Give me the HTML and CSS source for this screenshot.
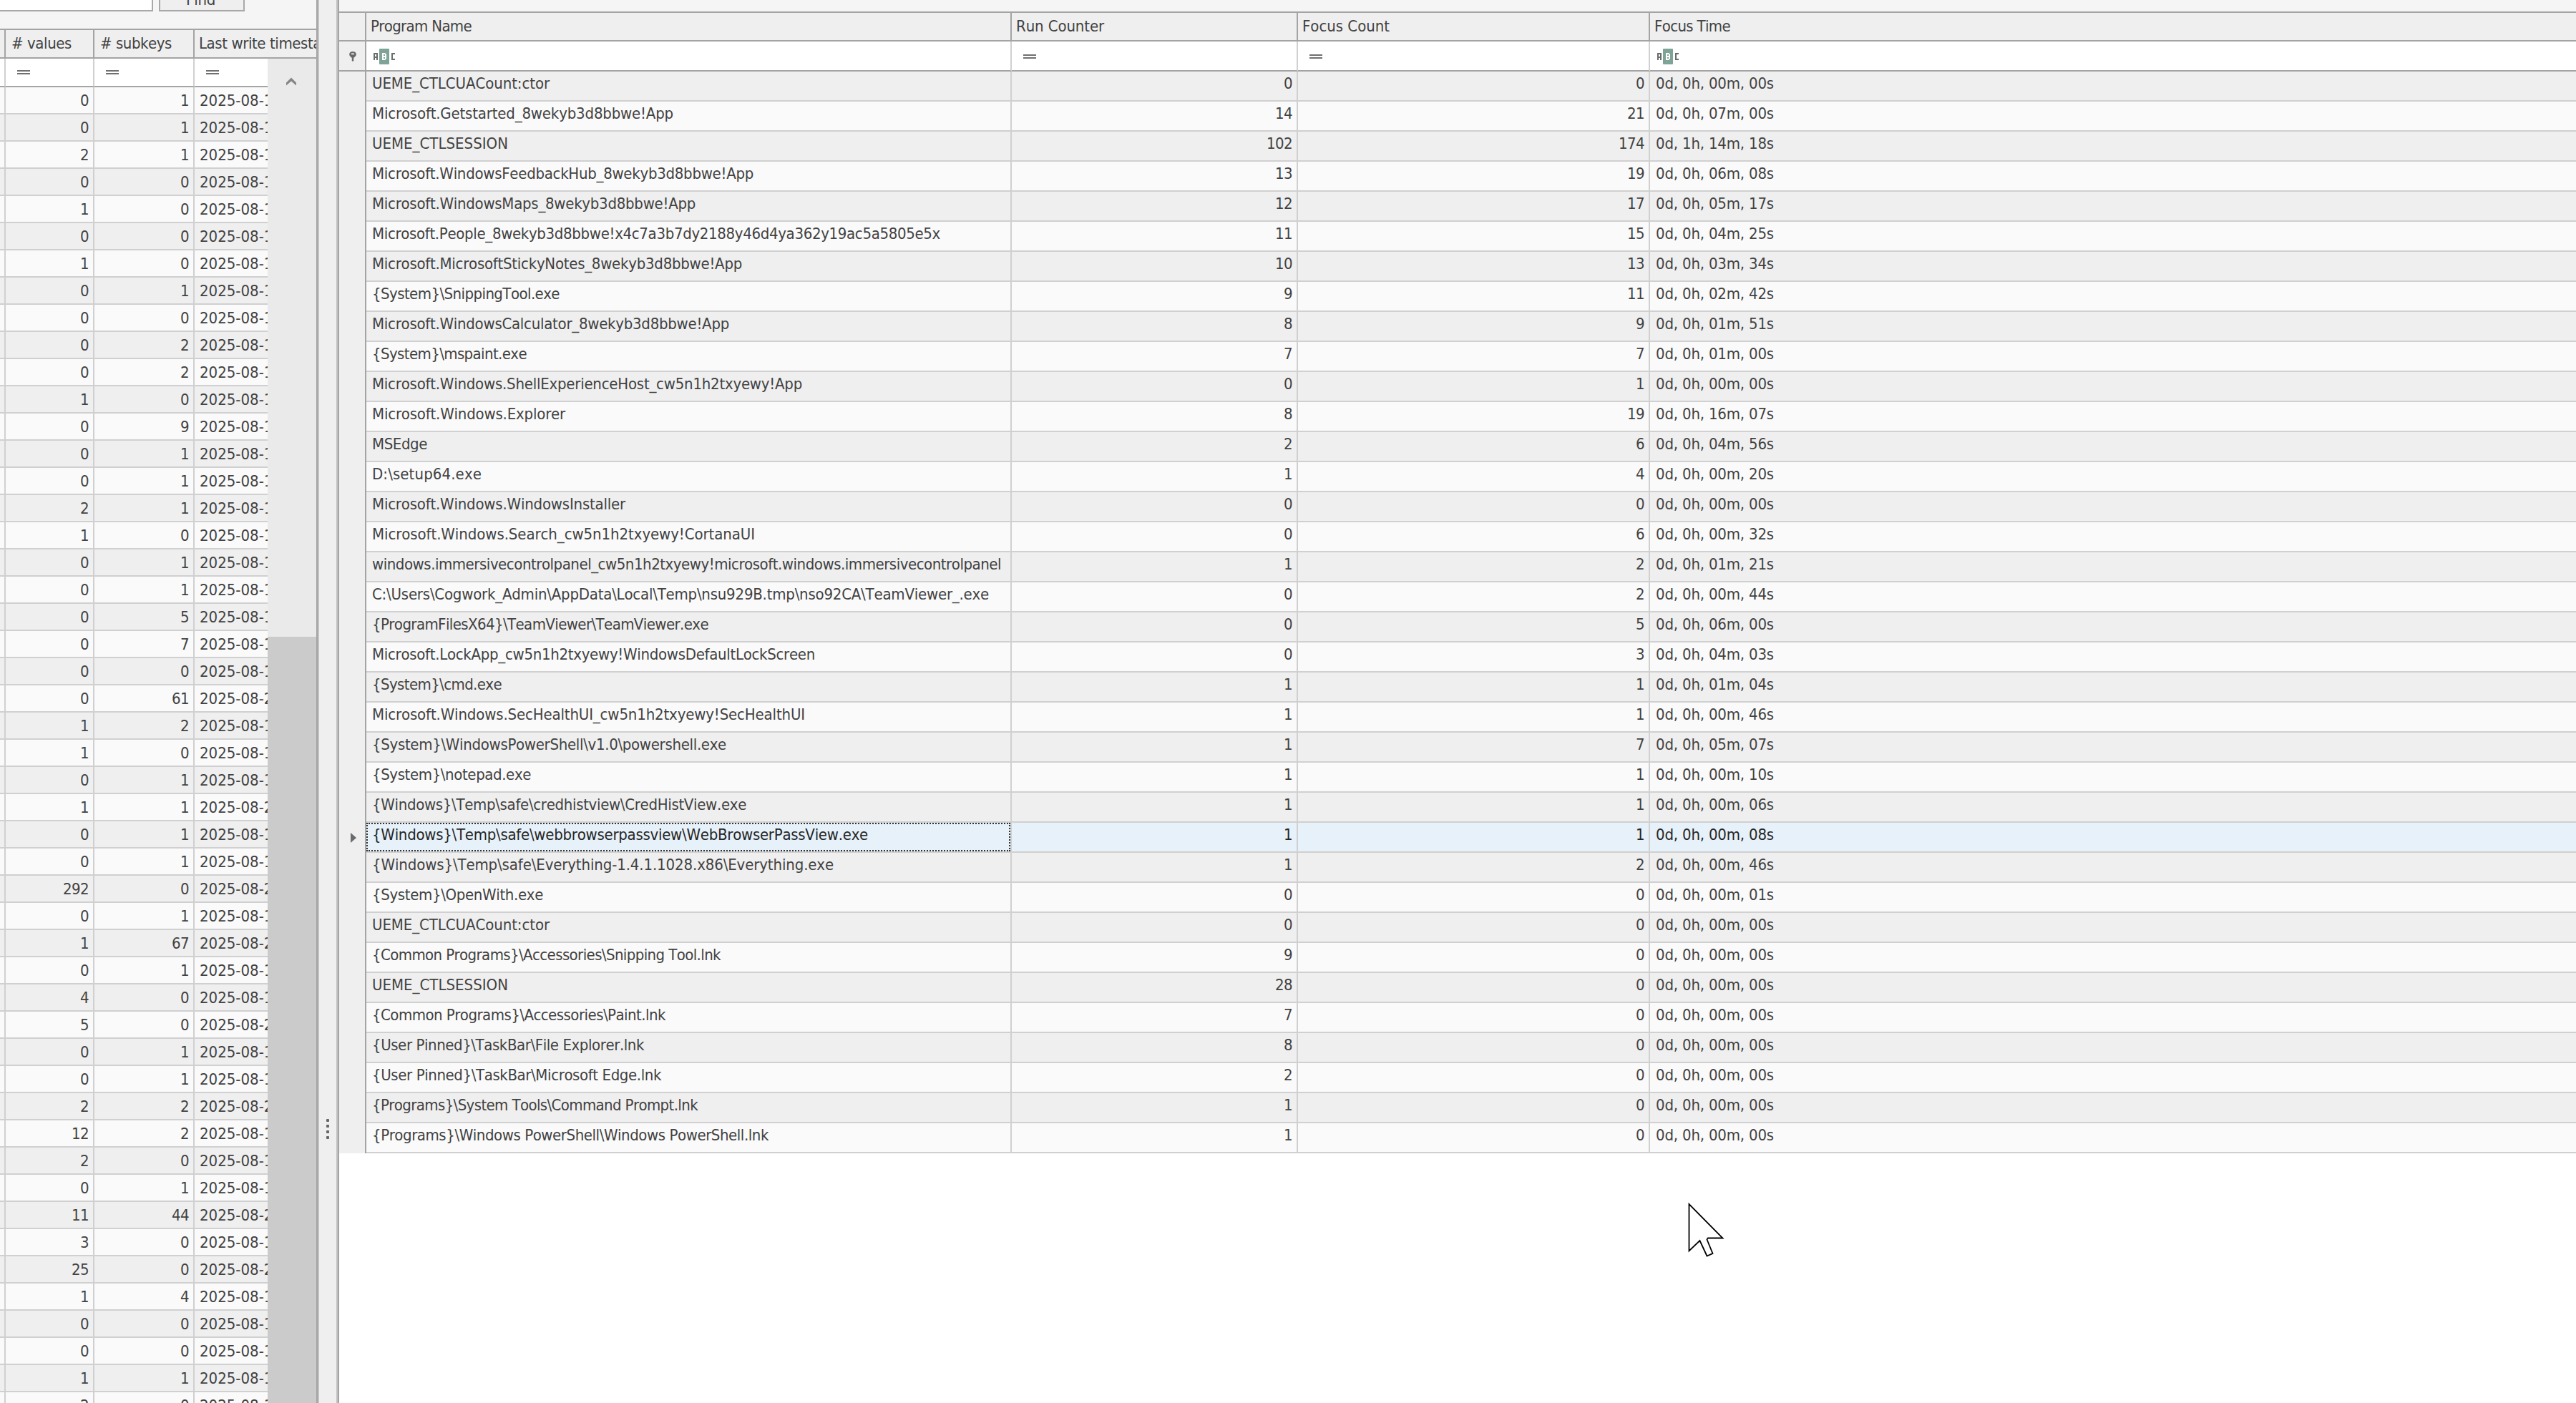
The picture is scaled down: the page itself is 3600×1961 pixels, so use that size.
FILE: index.html
```html
<!DOCTYPE html>
<html lang="en">
<head>
<meta charset="utf-8">
<title>Registry viewer</title>
<link rel="stylesheet" href="styles.css">
</head>
<body>
<div class="app">
  <section class="keys">
    <div class="search">
      <div class="search-box"></div>
      <div class="find"><span data-w="41">Find</span></div>
    </div>
    <div class="krow khead">
      <div></div>
      <div><span data-w="84">#&nbsp;values</span></div>
      <div><span data-w="100">#&nbsp;subkeys</span></div>
      <div><span data-w="202">Last write timestamp</span></div>
    </div>
    <div class="kbody">
      <div class="kgrid" id="keys">
        <div class="krow kfilter">
          <div></div><div><i class="eq"></i></div><div><i class="eq"></i></div><div><i class="eq"></i></div>
        </div>
      </div>
      <div class="scroll">
        <svg class="up" width="16" height="14" viewBox="0 0 16 14"><path d="M1 8.500 8 1.500 15 8.500V12.500L8 6.500 1 12.500Z" fill="#868686"/></svg>
        <div class="thumb"></div>
      </div>
    </div>
  </section>
  <div class="splitter"><i></i><i></i><i></i><i></i></div>
  <section class="programs">
    <div class="strip"></div>
    <div class="prow phead">
      <div></div>
      <div><span data-w="141">Program Name</span></div>
      <div><span data-w="123">Run Counter</span></div>
      <div><span data-w="122">Focus Count</span></div>
      <div><span data-w="106">Focus Time</span></div>
    </div>
    <div class="prow pfilter">
      <div class="pin"><svg width="12" height="16" viewBox="0 0 12 16"><path d="M6 1C8.800 1 10.800 2.600 10.800 5 10.800 7 9 8.500 7.200 10V14.500H4.800V10C3 8.500 1.200 7 1.200 5 1.200 2.600 3.200 1 6 1Z" fill="#686868"/><rect x="4" y="3" width="4" height="2.500" fill="#c4c4c4"/></svg></div>
      <div><svg class="abc" width="32" height="24" viewBox="0 0 32 24"><path d="M2 17V8H6V17M2 13H6M31 8H27V16H31" fill="none" stroke="#6c6c6c" stroke-width="2"/><rect x="9" y="1" width="14" height="22" rx="1" fill="#7fa396"/><path d="M13 7H17L19 9V15L17 17H13Z" fill="#fff"/><path d="M15 9H17V11H15ZM15 13H17V15H15Z" fill="#7fa396"/></svg></div>
      <div><i class="eq"></i></div>
      <div><i class="eq"></i></div>
      <div><svg class="abc" width="32" height="24" viewBox="0 0 32 24"><path d="M2 17V8H6V17M2 13H6M31 8H27V16H31" fill="none" stroke="#6c6c6c" stroke-width="2"/><rect x="9" y="1" width="14" height="22" rx="1" fill="#7fa396"/><path d="M13 7H17L19 9V15L17 17H13Z" fill="#fff"/><path d="M15 9H17V11H15ZM15 13H17V15H15Z" fill="#7fa396"/></svg></div>
    </div>
    <div id="programs"></div>
  </section>
</div>
<svg class="cursor" width="56" height="80" viewBox="0 0 56 80"><path d="M1.500 2V67.500L16.500 53 26.500 74.500 34.500 71 26.500 51.500 28 49.500H48.500Z" fill="#fff" stroke="#000" stroke-width="1.800"/></svg>
<script src="app.js"></script>
</body>
</html>
```
FILE: styles.css
```css
* { box-sizing: border-box; }
body {
  margin: 0;
  width: 3600px;
  height: 1961px;
  overflow: hidden;
  background: #fff;
  color: #424242;
  font: 22px/36px "DejaVu Sans Condensed", "DejaVu Sans", sans-serif;
  font-stretch: condensed;
  font-kerning: none;
  font-variant-ligatures: none;
  white-space: nowrap;
}
.app { display: flex; height: 1961px; }
span { display: inline-block; }

.keys {
  width: 446px;
  height: 1961px;
  display: flex;
  flex-direction: column;
  background: #f5f5f5;
  border-right: 2px solid #c2c2c2;
  box-shadow: inset -2px 0 #a4a4a4;
  padding-right: 2px;
  overflow: hidden;
}
.search { height: 40px; flex: none; display: flex; gap: 8px; align-items: flex-start; }
.search-box { width: 214px; height: 16px; background: #fff; border: solid #a8a8a8; border-width: 0 2px 2px 0; }
.find {
  width: 120px;
  height: 16px;
  background: #efefef;
  border: solid #a8a8a8;
  border-width: 0 2px 2px;
  padding-left: 36px;
  line-height: 0;
  overflow: hidden;
}
.find span { margin-top: -4px; }
.krow { display: grid; grid-template-columns: 8px 124px 140px 1fr; flex: none; }
.krow > div { border: solid #d0d0d0; border-width: 0 2px 2px 0; height: 38px; overflow: hidden; line-height: 37px; }
.krow > div:last-child { border-right: 0; }
.khead { border-top: 2px solid #a4a4a4; }
.krow.khead > div { height: 40px; border-color: #a4a4a4; background: #efefef; padding-left: 8px; }
.krow.khead > div:last-child { padding-left: 6px; }
.krow.khead > div:first-child { padding: 0; }
.kbody { flex: 1; display: flex; min-height: 0; }
.kgrid { width: 374px; overflow: hidden; }
.krow.kfilter > div { height: 40px; background: #fff; border-bottom-color: #a4a4a4; }
.krow .n { text-align: right; padding-right: 6px; letter-spacing: -0.6px; }
.krow .d { padding-left: 7px; }
.light > div { background: #fafafa; }
.dark > div { background: #efefef; }
.eq { display: block; width: 18px; height: 6px; margin: 16px 0 0 16px; border: solid #707070; border-width: 2px 0; }
.pfilter .eq { margin-top: 18px; }
.scroll { width: 68px; background: #eaeaea; display: flex; flex-direction: column; align-items: center; justify-content: space-between; padding-top: 25px; }
.up { margin-right: 2px; }
.thumb { width: 68px; height: 1071px; background: #cbcbcb; }

.splitter {
  width: 28px;
  background: #efefef;
  border-right: 2px solid #a4a4a4;
  box-shadow: inset -2px 0 #c2c2c2;
  padding: 1564px 0 0 10px;
  display: flex;
  flex-direction: column;
  gap: 4px;
}
.splitter i { width: 4px; height: 4px; background: #666; border-radius: 1px; }

.programs { flex: 1; }
.strip { height: 18px; background: #f5f5f5; border-bottom: 2px solid #a4a4a4; }
.prow { display: grid; grid-template-columns: 38px 902px 400px 492px 1fr; }
.prow > div { height: 42px; border: solid #d0d0d0; border-width: 0 2px 2px 0; line-height: 33px; overflow: hidden; }
.prow > div:last-child { border-right: 0; }
.prow.phead > div { height: 40px; line-height: 37px; background: #efefef; border-color: #a4a4a4; padding-left: 6px; }
.prow.pfilter > div { border-bottom-color: #a4a4a4; background: #fff; }
.prow > div:first-child, .prow.pfilter > div:first-child { background: #efefef; border-right-color: #a4a4a4; }
.prow:not(.phead):not(.pfilter) > div:first-child { border-bottom-width: 0; }
.pin svg { display: block; margin: 13px 0 0 13px; }
.abc { display: block; margin: 9px 0 0 9px; }
.prow .name { padding-left: 8px; }
.prow .n { text-align: right; padding-right: 6px; letter-spacing: -0.6px; }
.prow .time { padding-left: 8px; }
.prow.selected > div:not(:first-child) { background: #e6f1f9; color: #262626; }
.prow .focus { position: relative; }
.focus::after { content: ""; position: absolute; inset: 0; border: 2px dotted #333; }
.arrow { display: block; margin: 14px 0 0 16px; }
.cursor { position: absolute; left: 2359px; top: 1681px; }
```
FILE: app.js
```js
// values, subkeys, last write date
const keys = `0 1 19;0 1 19;2 1 19;0 0 19;1 0 19;0 0 19;1 0 19;0 1 19;0 0 19;0 2 19;0 2 19;1 0 19;0 9 19;0 1 19;0 1 19;2 1 19;1 0 19;0 1 19;0 1 19;0 5 19;0 7 19;0 0 19;0 61 20;1 2 19;1 0 19;0 1 19;1 1 20;0 1 19;0 1 19;292 0 20;0 1 19;1 67 20;0 1 19;4 0 19;5 0 20;0 1 19;0 1 19;2 2 20;12 2 19;2 0 19;0 1 19;11 44 20;3 0 19;25 0 20;1 4 19;0 0 19;0 0 19;1 1 19;2 0 19`;

// name | run counter | focus count | focus time | text width
const programs = String.raw`UEME_CTLCUACount:ctor|0|0|0d, 0h, 00m, 00s|248
Microsoft.Getstarted_8wekyb3d8bbwe!App|14|21|0d, 0h, 07m, 00s|421
UEME_CTLSESSION|102|174|0d, 1h, 14m, 18s|190
Microsoft.WindowsFeedbackHub_8wekyb3d8bbwe!App|13|19|0d, 0h, 06m, 08s|533
Microsoft.WindowsMaps_8wekyb3d8bbwe!App|12|17|0d, 0h, 05m, 17s|452
Microsoft.People_8wekyb3d8bbwe!x4c7a3b7dy2188y46d4ya362y19ac5a5805e5x|11|15|0d, 0h, 04m, 25s|794
Microsoft.MicrosoftStickyNotes_8wekyb3d8bbwe!App|10|13|0d, 0h, 03m, 34s|517
{System}\SnippingTool.exe|9|11|0d, 0h, 02m, 42s|262
Microsoft.WindowsCalculator_8wekyb3d8bbwe!App|8|9|0d, 0h, 01m, 51s|499
{System}\mspaint.exe|7|7|0d, 0h, 01m, 00s|216
Microsoft.Windows.ShellExperienceHost_cw5n1h2txyewy!App|0|1|0d, 0h, 00m, 00s|601
Microsoft.Windows.Explorer|8|19|0d, 0h, 16m, 07s|270
MSEdge|2|6|0d, 0h, 04m, 56s|77
D:\setup64.exe|1|4|0d, 0h, 00m, 20s|153
Microsoft.Windows.WindowsInstaller|0|0|0d, 0h, 00m, 00s|354
Microsoft.Windows.Search_cw5n1h2txyewy!CortanaUI|0|6|0d, 0h, 00m, 32s|535
windows.immersivecontrolpanel_cw5n1h2txyewy!microsoft.windows.immersivecontrolpanel|1|2|0d, 0h, 01m, 21s|879
C:\Users\Cogwork_Admin\AppData\Local\Temp\nsu929B.tmp\nso92CA\TeamViewer_.exe|0|2|0d, 0h, 00m, 44s|862
{ProgramFilesX64}\TeamViewer\TeamViewer.exe|0|5|0d, 0h, 06m, 00s|470
Microsoft.LockApp_cw5n1h2txyewy!WindowsDefaultLockScreen|0|3|0d, 0h, 04m, 03s|619
{System}\cmd.exe|1|1|0d, 0h, 01m, 04s|181
Microsoft.Windows.SecHealthUI_cw5n1h2txyewy!SecHealthUI|1|1|0d, 0h, 00m, 46s|605
{System}\WindowsPowerShell\v1.0\powershell.exe|1|7|0d, 0h, 05m, 07s|495
{System}\notepad.exe|1|1|0d, 0h, 00m, 10s|222
{Windows}\Temp\safe\credhistview\CredHistView.exe|1|1|0d, 0h, 00m, 06s|523
{Windows}\Temp\safe\webbrowserpassview\WebBrowserPassView.exe|1|1|0d, 0h, 00m, 08s|693
{Windows}\Temp\safe\Everything-1.4.1.1028.x86\Everything.exe|1|2|0d, 0h, 00m, 46s|645
{System}\OpenWith.exe|0|0|0d, 0h, 00m, 01s|239
UEME_CTLCUACount:ctor|0|0|0d, 0h, 00m, 00s|248
{Common Programs}\Accessories\Snipping Tool.lnk|9|0|0d, 0h, 00m, 00s|487
UEME_CTLSESSION|28|0|0d, 0h, 00m, 00s|190
{Common Programs}\Accessories\Paint.lnk|7|0|0d, 0h, 00m, 00s|410
{User Pinned}\TaskBar\File Explorer.lnk|8|0|0d, 0h, 00m, 00s|380
{User Pinned}\TaskBar\Microsoft Edge.lnk|2|0|0d, 0h, 00m, 00s|404
{Programs}\System Tools\Command Prompt.lnk|1|0|0d, 0h, 00m, 00s|455
{Programs}\Windows PowerShell\Windows PowerShell.lnk|1|0|0d, 0h, 00m, 00s|554`;

document.getElementById('keys').insertAdjacentHTML('beforeend',
  keys.split(';').map((line, i) => {
    const [v, s, d] = line.split(' ');
    return `<div class="krow ${i % 2 ? 'dark' : 'light'}"><div></div><div class="n">${v}</div><div class="n">${s}</div><div class="d"><span data-w="115">2025-08-${d}</span></div></div>`;
  }).join(''));

const SELECTED = 25;
document.getElementById('programs').innerHTML = programs.split('\n').map((line, i) => {
  const [name, run, count, time, w] = line.split('|');
  const sel = i === SELECTED;
  const arrow = sel ? '<svg class="arrow" width="8" height="14" viewBox="0 0 8 14"><path d="M0 0 8 7 0 14Z" fill="#6a6a6a"/></svg>' : '';
  return `<div class="prow ${i % 2 ? 'light' : 'dark'}${sel ? ' selected' : ''}"><div>${arrow}</div><div class="name${sel ? ' focus' : ''}"><span data-w="${w}">${name}</span></div><div class="n">${run}</div><div class="n">${count}</div><div class="time"><span data-w="165">${time}</span></div></div>`;
}).join('');

document.querySelectorAll('[data-w]').forEach(el => {
  const natural = el.getBoundingClientRect().width;
  el.style.letterSpacing = ((el.dataset.w - natural) / el.textContent.length).toFixed(3) + 'px';
});
```
